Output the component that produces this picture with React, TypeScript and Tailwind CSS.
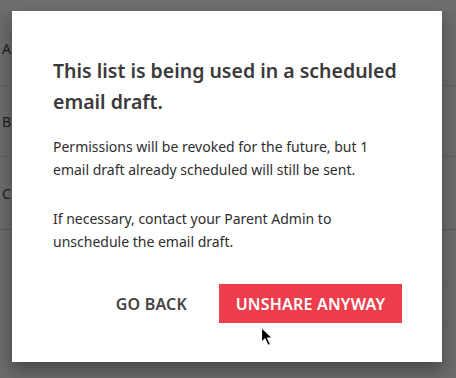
import React from "react";

export default function App() {
  return (
    <div className="relative w-[456px] h-[378px] overflow-hidden bg-[#6b6b6b]" style={{ fontFamily: '"Noto Sans", sans-serif' }}>
      {/* background page */}
      <div className="flex flex-col h-full">
        <div className="h-[11px] bg-[#6e6e6e]" />
        <div className="h-[75px] border-b border-[#616161] flex items-center px-[2px] text-[14px] text-[#1e1e1e]">A</div>
        <div className="h-[71px] border-b border-[#616161] flex items-center px-[2px] text-[14px] text-[#1e1e1e]">B</div>
        <div className="h-[73px] border-b border-[#5a5a5a] flex items-center px-[2px] text-[14px] text-[#1e1e1e]">C</div>
        <div className="h-[57px] border-b border-[#666666]" />
        <div className="h-[40px] border-b border-[#666666]" />
        <div className="flex-1" />
      </div>

      {/* modal */}
      <div className="absolute left-[12px] top-[11px] w-[430px] h-[351px] bg-white shadow-[0_8px_16px_rgba(0,0,0,0.35)] pl-[41px] pr-[40px] pt-[44px]">
        <h2 className="text-[19.5px] leading-[31px] font-semibold text-[#3a3a3a]">
          This list is being used in a scheduled email draft.
        </h2>
        <p className="mt-[18px] text-[14px] leading-[23px] text-[#2e2e2e]">
          Permissions will be revoked for the future, but 1 email draft already scheduled will still be sent.
        </p>
        <p className="mt-[26px] text-[14px] leading-[23px] text-[#2e2e2e]">
          If necessary, contact your Parent Admin to unschedule the email draft.
        </p>
        <div className="mt-[31px] flex justify-end items-center gap-[32px]">
          <button className="text-[16px] font-semibold text-[#444444] tracking-[0.2px]">GO BACK</button>
          <button className="w-[183px] h-[39px] bg-[#ee3e4b] text-white text-[16px] font-semibold tracking-[0.2px]">
            UNSHARE ANYWAY
          </button>
        </div>
      </div>

      {/* cursor */}
      <svg className="absolute left-[260px] top-[326px]" width="16" height="22" viewBox="0 0 16 22">
        <path d="M1.5 1.5 L1.5 16.5 L5 13 L8 19.5 L10.5 18.3 L7.6 12 L12.5 12 Z" fill="#000" stroke="#fff" strokeWidth="1.2" strokeLinejoin="round" />
      </svg>
    </div>
  );
}
